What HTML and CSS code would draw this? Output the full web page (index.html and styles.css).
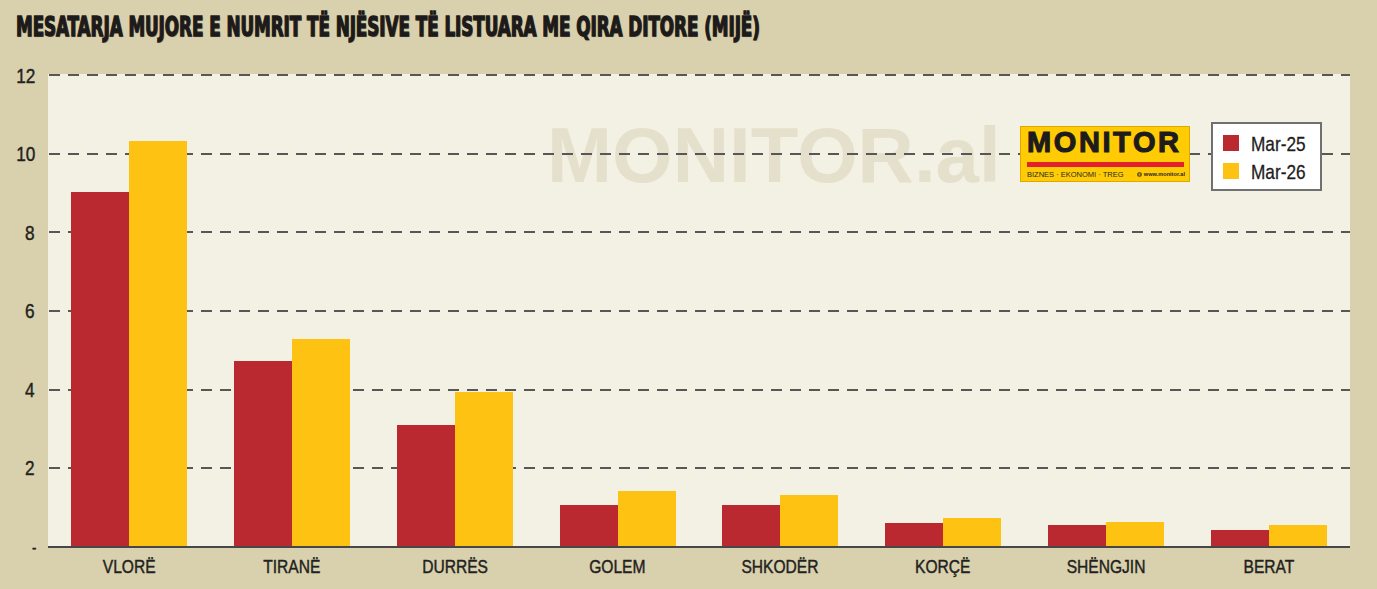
FILE: index.html
```html
<!DOCTYPE html>
<html lang="sq">
<head>
<meta charset="utf-8">
<title>Mesatarja mujore e numrit të njësive të listuara me qira ditore</title>
<link rel="stylesheet" href="styles.css">
</head>
<body>
<div class="page">
  <h1 class="title"><span class="title-text">MESATARJA MUJORE E NUMRIT TË NJËSIVE TË LISTUARA ME QIRA DITORE (MIJË)</span></h1>
  <div class="chart">
    <div class="yaxis">
      <div class="ytick"><span class="nar">12</span></div>
      <div class="ytick"><span class="nar">10</span></div>
      <div class="ytick"><span class="nar">8</span></div>
      <div class="ytick"><span class="nar">6</span></div>
      <div class="ytick"><span class="nar">4</span></div>
      <div class="ytick"><span class="nar">2</span></div>
      <div class="ytick"><span class="nar zero">-</span></div>
    </div>
    <div class="plot">
      <div class="watermark">MONITOR.al</div>
      <div class="gridlines">
        <div class="gl"></div><div class="gl"></div><div class="gl"></div>
        <div class="gl"></div><div class="gl"></div><div class="gl"></div>
      </div>
      <div class="bars">
        <div class="group"><div class="bar red" style="--v:9.00"></div><div class="bar yel" style="--v:10.30"></div></div>
        <div class="group"><div class="bar red" style="--v:4.70"></div><div class="bar yel" style="--v:5.27"></div></div>
        <div class="group"><div class="bar red" style="--v:3.08"></div><div class="bar yel" style="--v:3.92"></div></div>
        <div class="group"><div class="bar red" style="--v:1.04"></div><div class="bar yel" style="--v:1.40"></div></div>
        <div class="group"><div class="bar red" style="--v:1.04"></div><div class="bar yel" style="--v:1.30"></div></div>
        <div class="group"><div class="bar red" style="--v:0.58"></div><div class="bar yel" style="--v:0.72"></div></div>
        <div class="group"><div class="bar red" style="--v:0.53"></div><div class="bar yel" style="--v:0.62"></div></div>
        <div class="group"><div class="bar red" style="--v:0.41"></div><div class="bar yel" style="--v:0.53"></div></div>
      </div>
      <div class="logo">
        <div class="logo-name">MONITOR</div>
        <div class="logo-bar"></div>
        <div class="logo-foot">
          <span class="logo-tag">BIZNES · EKONOMI · TREG</span>
          <span class="logo-url"><svg class="globe" viewBox="0 0 10 10" width="5" height="5"><circle cx="5" cy="5" r="4.6" fill="#231f20"/><path d="M1 5h8M5 1v8M2.2 2.8c1.8 1 3.8 1 5.6 0M2.2 7.2c1.8-1 3.8-1 5.6 0" stroke="#ffcb05" stroke-width="0.9" fill="none"/></svg>www.monitor.al</span>
        </div>
      </div>
      <div class="legend">
        <div class="leg-item"><span class="swatch red"></span><span class="nar leg-text">Mar-25</span></div>
        <div class="leg-item"><span class="swatch yel"></span><span class="nar leg-text">Mar-26</span></div>
      </div>
    </div>
  </div>
  <div class="xaxis">
    <div class="xlabel"><span class="nar">VLORË</span></div>
    <div class="xlabel"><span class="nar">TIRANË</span></div>
    <div class="xlabel"><span class="nar">DURRËS</span></div>
    <div class="xlabel"><span class="nar">GOLEM</span></div>
    <div class="xlabel"><span class="nar">SHKODËR</span></div>
    <div class="xlabel"><span class="nar">KORÇË</span></div>
    <div class="xlabel"><span class="nar">SHËNGJIN</span></div>
    <div class="xlabel"><span class="nar">BERAT</span></div>
  </div>
</div>
</body>
</html>
```
FILE: styles.css
```css
* { box-sizing: border-box; }

html, body {
  margin: 0;
  padding: 0;
  background: #d9d1ad;
}

body {
  font-family: "Liberation Sans", Arial, sans-serif;
  color: #231f20;
}

.page {
  width: 1377px;
  height: 589px;
  padding-top: 14px;
  background: #d9d1ad;
  overflow: hidden;
}

.title {
  margin: 0 0 0 16px;
  height: 26px;
  font-family: "DejaVu Sans Condensed", "DejaVu Sans", sans-serif;
  font-weight: 700;
  font-size: 26px;
  line-height: 26px;
  white-space: nowrap;
  color: #1c1a1a;
}

.title-text {
  display: inline-block;
  transform: scaleX(0.715);
  transform-origin: left center;
  -webkit-text-stroke: 1.3px #1c1a1a;
  text-shadow: 1px 1px 1px rgba(0, 0, 0, 0.4);
}

.nar {
  display: inline-block;
  transform: scaleX(0.82);
  white-space: nowrap;
  -webkit-text-stroke: 0.45px currentColor;
}

.chart {
  display: flex;
  margin-top: 34px;
}

.yaxis {
  width: 48px;
  height: 471px;
  margin-top: 1px;
  display: flex;
  flex-direction: column;
  justify-content: space-between;
}

.ytick {
  height: 0;
  display: flex;
  align-items: center;
  justify-content: flex-end;
  padding-right: 13px;
  font-size: 21px;
  line-height: 21px;
}

.ytick .nar {
  transform-origin: right center;
}

.ytick .zero {
  font-size: 16px;
  margin-top: 2px;
  margin-right: -1px;
}

.plot {
  position: relative;
  width: 1302px;
  height: 474px;
  background: #f3f1e4;
  border-bottom: 2px solid #474747;
  display: grid;
  grid-template-columns: 1fr;
  grid-template-rows: 1fr;
}

.watermark {
  position: absolute;
  left: 499px;
  top: 42px;
  z-index: 0;
  font-weight: 700;
  font-size: 78px;
  line-height: 78px;
  color: #e5e0cc;
  white-space: nowrap;
}

.gridlines {
  grid-area: 1 / 1;
  position: relative;
  z-index: 1;
  display: grid;
  grid-template-rows: repeat(6, 1fr);
}

.gl {
  background: repeating-linear-gradient(90deg, transparent 0 1px, #575757 1px 12px, transparent 12px 19px) left top / 100% 2px no-repeat;
}

.bars {
  grid-area: 1 / 1;
  position: relative;
  z-index: 1;
  display: flex;
}

.group {
  flex: 1;
  display: flex;
  justify-content: center;
  align-items: flex-end;
}

.bar {
  width: 58px;
  height: calc(var(--v) * 39.33px);
}

.red { background: #b9292f; }
.yel { background: #fec312; }

.logo {
  position: absolute;
  left: 972px;
  top: 52px;
  z-index: 2;
  width: 170px;
  height: 56px;
  background: #ffcb05;
  border: 1px solid #dfa700;
  padding: 1px 5px 0 6px;
  display: flex;
  flex-direction: column;
}

.logo-name {
  font-weight: 700;
  font-size: 29px;
  line-height: 28px;
  letter-spacing: 2.6px;
  color: #1d1b1b;
  -webkit-text-stroke: 1.1px #1d1b1b;
  white-space: nowrap;
}

.logo-bar {
  margin-top: 6px;
  height: 5px;
  width: 157px;
  background: #e3202b;
}

.logo-foot {
  margin-top: 3px;
  width: 158px;
  display: flex;
  justify-content: space-between;
  align-items: center;
  font-size: 7.5px;
  line-height: 9px;
  color: #2a2626;
  white-space: nowrap;
}

.logo-url {
  display: flex;
  align-items: center;
  gap: 1.5px;
  font-weight: 700;
  font-size: 5.6px;
}

.globe { display: block; }

.legend {
  position: absolute;
  left: 1163px;
  top: 48px;
  z-index: 2;
  width: 111px;
  height: 69px;
  background: #ffffff;
  border: 2px solid #707070;
  padding: 5px 8px 0 10px;
  display: flex;
  flex-direction: column;
}

.leg-item {
  height: 28px;
  display: flex;
  align-items: center;
}

.swatch {
  width: 16px;
  height: 16px;
  flex: none;
}

.leg-text {
  margin-left: 12px;
  font-size: 21px;
  line-height: 21px;
  transform-origin: left center;
  color: #1f1c1c;
  -webkit-text-stroke: 0.3px #1f1c1c;
}

.xaxis {
  display: flex;
  width: 1302px;
  margin-left: 48px;
  margin-top: 9px;
}

.xlabel {
  flex: 1;
  text-align: center;
  font-size: 19px;
  line-height: 19px;
  color: #231f20;
}
```
